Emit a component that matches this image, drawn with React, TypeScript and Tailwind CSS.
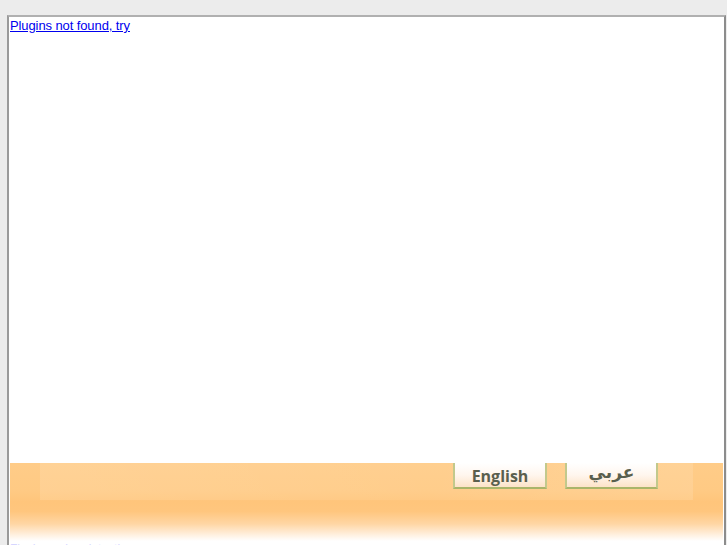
import React from "react";

export default function App() {
  return (
    <div className="h-[545px] w-[727px] overflow-hidden bg-[#ececec] pl-[7px] pr-[1px] pt-[15px]" style={{ fontFamily: '"Liberation Sans", Arial, sans-serif' }}>
      <div className="flex h-[600px] flex-col border-l-2 border-r-2 border-t-2 border-l-[#9a9a9a] border-r-[#8c8c8c] border-t-[#b0b0b0] bg-white">
        <div className="h-[446px] pl-[1px] pt-[1px] text-[13px] leading-[15px]">
          <a href="#" className="text-[13px] leading-[15px] tracking-[-0.1px] text-[#0000ee] underline">
            Plugins not found, try
          </a>
        </div>
        <div className="mx-[1px] h-[78px] bg-[linear-gradient(to_bottom,#ffcc88_0%,#ffca84_35%,#ffc57b_50%,#ffc67e_62%,#ffd6a4_78%,#fff0df_92%,#ffffff_100%)]">
          <div className="ml-[30px] mr-[30px] flex h-[37px] justify-end gap-[18px] bg-[linear-gradient(to_right,rgba(255,255,255,0.12),rgba(255,255,255,0.06)_60%,rgba(255,255,255,0.12))] pr-[35px]">
            <div className="flex h-[26px] w-[94px] items-center justify-center border-x-2 border-b-2 border-x-[#c2c98c] border-b-[#aab56a] bg-[linear-gradient(to_bottom,#ffffff_0%,#fff6ee_50%,#fde3c8_100%)] pt-[1px] text-[16px] font-bold text-[#5a5f4e]" style={{ fontFamily: '"Open Sans", "DejaVu Sans", sans-serif' }}>
              English
            </div>
            <div className="flex h-[26px] w-[93px] items-center justify-center border-x-2 border-b-2 border-x-[#c2c98c] border-b-[#aab56a] bg-[linear-gradient(to_bottom,#ffffff_0%,#fff6ee_50%,#fde3c8_100%)] pb-[4px] text-[17px] font-bold text-[#5a5f4e]" style={{ fontFamily: '"DejaVu Sans", "Noto Sans", sans-serif' }}>
              عربي
            </div>
          </div>
        </div>
        <div className="pl-[1px] pt-[1px] text-[12px] leading-[14px] text-[#d6d6ff]">
          Flash version detection
        </div>
      </div>
    </div>
  );
}
